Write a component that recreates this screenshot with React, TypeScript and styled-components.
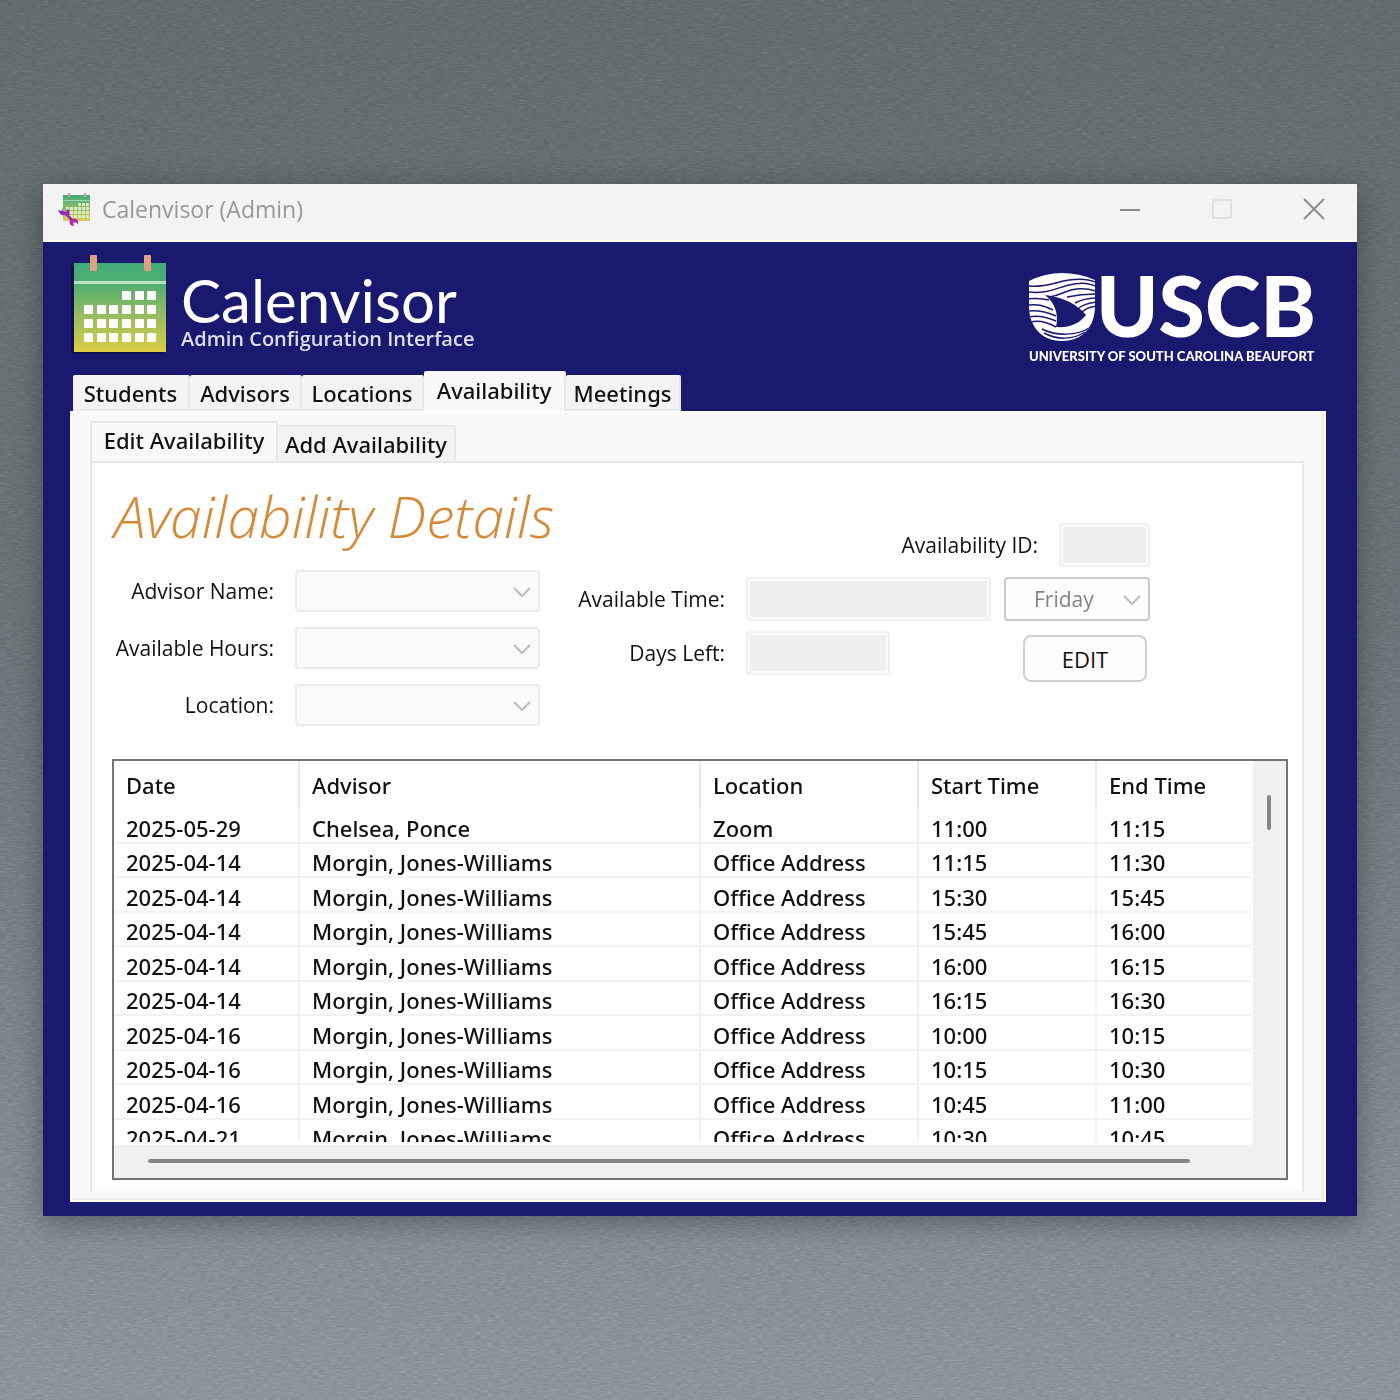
import React from "react";
import styled, { createGlobalStyle, css } from "styled-components";

const sans = '"Open Sans", "Noto Sans", sans-serif';
const medium = '"Noto Sans", "Open Sans", sans-serif';
const NAVY = "#191970";

const Global = createGlobalStyle`
  *, *::before, *::after { box-sizing: border-box; }
  body { margin: 0; font-family: ${sans}; color: #111; }
`;

const Desktop = styled.main`
  position: relative;
  min-height: 100vh;
  display: flex;
  align-items: center;
  padding: 40px 43px;
  background: linear-gradient(180deg, #5b6466 0%, #626b6e 45%, #737b82 75%, #838a94 100%);
`;

const Grain = styled.svg`
  position: absolute;
  inset: 0;
  width: 100%;
  height: 100%;
  opacity: 0.36;
  mix-blend-mode: overlay;
`;

const Window = styled.section`
  position: relative;
  flex: 1;
  min-width: 0;
  background: ${NAVY};
  box-shadow: 0 6px 26px rgba(0, 0, 0, 0.34);
`;

const TitleBar = styled.header`
  display: flex;
  align-items: center;
  height: 58px;
  padding: 0 31px 6px 14px;
  background: #f3f3f3;
  border-bottom: 2px solid #fff;
`;

const WindowTitle = styled.span`
  flex: 1;
  margin-left: 10px;
  font-size: 23px;
  line-height: 32px;
  color: #979797;
`;

const Controls = styled.div`
  display: flex;
  gap: 68px;
`;

const ControlButton = styled.button`
  display: flex;
  padding: 0;
  border: 0;
  background: none;
  color: #8c8c8c;
  &:disabled { color: #e0e0e0; }
`;

const Client = styled.div`
  padding: 0 31px 14px 27px;
`;

const Brand = styled.div`
  display: flex;
  justify-content: space-between;
  height: 129px;
  padding: 10px 10px 0 0;
`;

const BrandLeft = styled.div`
  display: flex;
  gap: 14px;
`;

const BrandText = styled.div`
  padding-top: 20px;
  color: #fff;
`;

const BrandName = styled.div`
  font-family: Lato, ${sans};
  font-size: 60px;
  line-height: 56px;
`;

const BrandSub = styled.div`
  font-size: 20px;
  line-height: 22px;
  font-weight: 600;
  color: #dedeee;
`;

const School = styled.div`
  padding-top: 20px;
  font-family: Lato, ${sans};
  font-weight: 900;
  color: #fff;
`;

const SchoolTop = styled.div`
  display: flex;
  align-items: flex-start;
  justify-content: space-between;
  height: 76px;
`;

const SchoolLetters = styled.span`
  font-size: 84px;
  line-height: 66px;
`;

const SchoolName = styled.div`
  font-size: 13px;
  line-height: 16px;
  white-space: nowrap;
`;

const TabList = styled.div<{ $inset: number }>`
  display: flex;
  align-items: flex-end;
  padding-left: ${(p) => p.$inset}px;
`;

const Tab = styled.button<{ $width: number; $active?: boolean }>`
  width: ${(p) => p.$width}px;
  height: 36px;
  padding: 0;
  border: 2px solid #e8e8e8;
  border-width: 2px 2px 2px 0;
  border-top-color: #f4f4f4;
  border-radius: 2px 2px 0 0;
  background: #f3f3f3;
  font: 500 22px/32px ${medium};
  color: #111;
  white-space: nowrap;
  ${(p) =>
    p.$active &&
    css`
      height: 40px;
      padding-bottom: 4px;
      border-bottom: 0;
      background: #f9f9f9;
    `}
`;

const OuterPanel = styled.div`
  padding: 9px 20px 8px 18px;
  border: 2px solid #fff;
  border-top-width: 1px;
  background: #f9f9f9;
  box-shadow: inset -3px -2px 0 #ececec;
`;

const SubTab = styled(Tab)`
  border-color: #e8e8e8;
  border-bottom-width: 0;
  border-left-width: ${(p) => (p.$active ? 2 : 0)}px;
`;

const InnerPanel = styled.div`
  padding: 0 0 3px 4px;
  border: solid #e8e8e8;
  border-width: 2px 2px 0 2px;
`;

const Page = styled.div`
  padding: 16px 14px 9px 16px;
  background: #fff;
`;

const Form = styled.form`
  display: flex;
  gap: 28px;
  margin-bottom: 33px;
`;

const LeftColumn = styled.div`
  width: 428px;
  display: flex;
  flex-direction: column;
  gap: 15px;
`;

const Heading = styled.h1`
  margin: 0;
  padding: 0 0 2px 2px;
  font: italic 300 57px/74px ${sans};
  color: #d68a38;
  white-space: nowrap;
`;

const RightColumn = styled.div`
  width: 582px;
  padding-top: 44px;
  display: flex;
  flex-direction: column;
  gap: 10px;
`;

const Field = styled.div<{ $end?: boolean }>`
  display: flex;
  align-items: center;
  justify-content: ${(p) => (p.$end ? "flex-end" : "flex-start")};
`;

const Label = styled.label<{ $width?: number }>`
  flex: none;
  width: ${(p) => (p.$width ? `${p.$width}px` : "auto")};
  margin-right: 21px;
  text-align: right;
  font-size: 21px;
  line-height: 30px;
  white-space: nowrap;
`;

const TextBox = styled.input<{ $width: number }>`
  flex: none;
  width: ${(p) => p.$width}px;
  height: 44px;
  padding: 0 8px;
  border: 2px solid #f1f1f1;
  border-radius: 4px;
  background: #efefef;
  box-shadow: inset 0 0 0 2px #fafafa;
  font: 21px ${sans};
`;

const SelectWrap = styled.span<{ $width: number }>`
  position: relative;
  width: ${(p) => p.$width}px;
  svg {
    position: absolute;
    right: 9px;
    top: 50%;
    margin-top: -4px;
    pointer-events: none;
  }
`;

const Select = styled.select<{ $strong?: boolean }>`
  display: block;
  width: 100%;
  height: ${(p) => (p.$strong ? 44 : 42)}px;
  padding: 0 28px;
  appearance: none;
  border: 2px solid ${(p) => (p.$strong ? "#cacaca" : "#ececec")};
  border-radius: 4px;
  background: ${(p) => (p.$strong ? "#fdfdfd" : "#fafafa")};
  color: #838383;
  opacity: 1;
  font: 21px ${sans};
`;

const Trailing = styled.div<{ $right: number }>`
  margin-left: auto;
  padding-right: ${(p) => p.$right}px;
  display: flex;
`;

const EditButton = styled.button`
  width: 124px;
  height: 47px;
  margin: 4px 0 -7px;
  padding: 0;
  border: 2px solid #d0d0d0;
  border-radius: 8px;
  background: #fdfdfd;
  font: 22px ${sans};
  color: #111;
`;

const Grid = styled.div`
  display: grid;
  grid-template-columns: 1fr 33px;
  grid-template-rows: 384px 33px;
  border: 2px solid #747474;
  background: #f0f0f0;
`;

const Viewport = styled.div`
  overflow: hidden;
  padding-right: 1px;
  border-bottom: 3px solid #fff;
  border-radius: 0 0 4px 0;
  background: #fff;
`;

const Table = styled.table`
  width: 100%;
  table-layout: fixed;
  border-collapse: separate;
  border-spacing: 0;
  font-family: ${medium};
  font-size: 22px;
  font-weight: 500;
  line-height: 28px;
  white-space: nowrap;
`;

const Col = styled.col<{ $width?: number }>`
  width: ${(p) => (p.$width ? `${p.$width}px` : "auto")};
`;

const Th = styled.th`
  height: 48px;
  padding: 0 12px;
  text-align: left;
  font-weight: 500;
  border-right: 2px solid #e8e8e8;
  &:last-child { border-right: 0; }
`;

const Tr = styled.tr`
  height: 35px;
  &:nth-child(even) { height: 34px; }
`;

const Td = styled.td`
  padding: 4px 12px 0;
  border-right: 2px solid #f2f2f2;
  border-bottom: 2px solid #f2f2f2;
  &:last-child { border-right: 0; }
`;

const VTrack = styled.div`
  padding: 34px 14px 0;
`;

const VThumb = styled.div`
  width: 4px;
  height: 35px;
  border-radius: 2px;
  background: #858585;
`;

const HTrack = styled.div`
  grid-column: 1 / -1;
  padding: 14px 96px 0 34px;
`;

const HThumb = styled.div`
  height: 4px;
  border-radius: 2px;
  background: #858585;
`;

const DOTS = [
  [38, 30], [51, 30], [63, 30],
  ...[44, 58, 72].flatMap((y) => [0, 13, 25, 38, 51, 63].map((x) => [x, y])),
];

function CalendarLogo() {
  return (
    <svg width="97" height="102" viewBox="0 0 97 102" aria-hidden="true">
      <defs>
        <linearGradient id="calBody" x1="0" y1="0" x2="0" y2="1">
          <stop offset="0" stopColor="#40ab78" />
          <stop offset="0.25" stopColor="#55ae70" />
          <stop offset="0.55" stopColor="#8fbb62" />
          <stop offset="1" stopColor="#dccd45" />
        </linearGradient>
      </defs>
      <rect x="1" y="14" width="91" height="88" fill="#10104f" />
      <rect x="4" y="11" width="92" height="89" fill="url(#calBody)" />
      <rect x="4" y="29" width="92" height="3" fill="#b9e2c4" />
      <rect x="20" y="3" width="7" height="16" rx="1" fill="#e0a083" />
      <rect x="74" y="3" width="7" height="16" rx="1" fill="#e0a083" />
      {DOTS.map(([x, y]) => (
        <rect key={`${x}-${y}`} x={x + 14} y={y + 9} width="9" height="9" rx="1" fill="#fff" />
      ))}
    </svg>
  );
}

function AppIcon() {
  return (
    <svg width="35" height="34" viewBox="0 0 35 34" aria-hidden="true">
      <defs>
        <linearGradient id="appBody" x1="0" y1="0" x2="0" y2="1">
          <stop offset="0" stopColor="#3fa97a" />
          <stop offset="0.5" stopColor="#8cba68" />
          <stop offset="1" stopColor="#d8cf55" />
        </linearGradient>
        <linearGradient id="wrench" x1="0" y1="0" x2="1" y2="1">
          <stop offset="0" stopColor="#7b2bd0" />
          <stop offset="1" stopColor="#c0249c" />
        </linearGradient>
      </defs>
      <rect x="6" y="3" width="27" height="26" fill="url(#appBody)" />
      <rect x="6" y="8" width="27" height="1" fill="#9ad4b2" />
      <rect x="11" y="1" width="2" height="4" fill="#e0a083" />
      <rect x="27" y="1" width="2" height="4" fill="#e0a083" />
      {[11, 15, 19, 23].flatMap((y, r) =>
        [9, 13, 17, 21, 25, 29].slice(r === 0 ? 3 : 0).map((x) => (
          <rect key={`${x}-${y}`} x={x} y={y} width="3" height="3" fill="#dcebc4" />
        )),
      )}
      <path
        d="M5 15l1 4 3 1 1-3c3 1 3 4 2 6l4 4c3-1 6 1 5 5l-3-2-2 1 1 3c-4 0-5-3-4-6l-5-5c-3 1-6-1-7-5l3 1 1-1z"
        fill="url(#wrench)"
      />
    </svg>
  );
}

function Shield() {
  return (
    <svg width="67" height="72" viewBox="0 0 67 72" aria-hidden="true">
      <defs>
        <clipPath id="shieldClip">
          <path d="M0 9Q16 1 33 1T66 8V34C66 54 54 69 33 69S0 54 0 34Z" />
        </clipPath>
      </defs>
      <g clipPath="url(#shieldClip)">
        <rect width="67" height="72" fill="#fff" />
        <g fill="none" stroke={NAVY} strokeWidth="1.5">
          <path d="M-1 14C16 16 26 10 40 8S60 8 67 10" />
          <path d="M-1 20C18 22 28 16 40 13S58 11 67 14" />
          <path d="M20 25C30 24 34 20 42 18S58 16 67 19" />
          <path d="M-1 27C6 26 12 26 20 28M38 25C48 23 56 22 67 22" />
          <path d="M-1 33C8 32 14 33 24 38M46 31C52 28 58 26 67 26" />
          <path d="M-1 39C8 38 18 40 27 44M50 36C54 32 60 31 67 30" />
          <path d="M0 45C8 43 18 45 27 49M53 40C56 37 60 35 67 34" />
          <path d="M2 50C10 48 18 50 27 55" />
          <path d="M13 57C26 64 48 64 60 56" />
          <path d="M15 61C28 68 44 68 56 60" />
        </g>
        <path d="M16 23C36 26 48 32 57 43C50 52 40 56 27 55C30 42 26 31 16 23Z" fill={NAVY} />
      </g>
    </svg>
  );
}

function Chevron() {
  return (
    <svg width="18" height="12" viewBox="0 0 18 12" fill="none" stroke="#bcbcbc" strokeWidth="2" aria-hidden="true">
      <path d="M1 1l8 8 8-8" />
    </svg>
  );
}

const MORGIN = "Morgin, Jones-Williams";
const OFFICE = "Office Address";
const ROWS = [
  ["2025-05-29", "Chelsea, Ponce", "Zoom", "11:00", "11:15"],
  ["2025-04-14", MORGIN, OFFICE, "11:15", "11:30"],
  ["2025-04-14", MORGIN, OFFICE, "15:30", "15:45"],
  ["2025-04-14", MORGIN, OFFICE, "15:45", "16:00"],
  ["2025-04-14", MORGIN, OFFICE, "16:00", "16:15"],
  ["2025-04-14", MORGIN, OFFICE, "16:15", "16:30"],
  ["2025-04-16", MORGIN, OFFICE, "10:00", "10:15"],
  ["2025-04-16", MORGIN, OFFICE, "10:15", "10:30"],
  ["2025-04-16", MORGIN, OFFICE, "10:45", "11:00"],
  ["2025-04-21", MORGIN, OFFICE, "10:30", "10:45"],
];

const TABS = [
  { name: "Students", width: 117 },
  { name: "Advisors", width: 112 },
  { name: "Locations", width: 122 },
  { name: "Availability", width: 142 },
  { name: "Meetings", width: 115 },
];

function SelectField({ id, label }: { id: string; label: string }) {
  return (
    <Field>
      <Label htmlFor={id} $width={162}>{label}</Label>
      <SelectWrap $width={245}>
        <Select id={id} disabled />
        <Chevron />
      </SelectWrap>
    </Field>
  );
}

export default function App() {
  return (
    <>
      <Global />
      <Desktop>
        <Grain aria-hidden="true">
          <filter id="grain">
            <feTurbulence type="fractalNoise" baseFrequency="0.16 0.7" numOctaves="4" seed="4" />
            <feColorMatrix type="saturate" values="0" />
          </filter>
          <rect width="100%" height="100%" filter="url(#grain)" />
        </Grain>
        <Window>
          <TitleBar>
            <AppIcon />
            <WindowTitle>Calenvisor (Admin)</WindowTitle>
            <Controls>
              <ControlButton aria-label="Minimize">
                <svg width="24" height="24" stroke="currentColor" strokeWidth="2" fill="none"><path d="M2 13h20" /></svg>
              </ControlButton>
              <ControlButton aria-label="Maximize" disabled>
                <svg width="24" height="24" stroke="currentColor" strokeWidth="2" fill="none"><rect x="3" y="3" width="18" height="18" rx="2" /></svg>
              </ControlButton>
              <ControlButton aria-label="Close">
                <svg width="24" height="24" stroke="currentColor" strokeWidth="2" fill="none"><path d="M2 2l20 20M22 2L2 22" /></svg>
              </ControlButton>
            </Controls>
          </TitleBar>
          <Client>
            <Brand>
              <BrandLeft>
                <CalendarLogo />
                <BrandText>
                  <BrandName>Calenvisor</BrandName>
                  <BrandSub>Admin Configuration Interface</BrandSub>
                </BrandText>
              </BrandLeft>
              <School>
                <SchoolTop>
                  <Shield />
                  <SchoolLetters>USCB</SchoolLetters>
                </SchoolTop>
                <SchoolName>UNIVERSITY OF SOUTH CAROLINA BEAUFORT</SchoolName>
              </School>
            </Brand>
            <TabList $inset={3} role="tablist">
              {TABS.map((t) => (
                <Tab key={t.name} role="tab" $width={t.width} $active={t.name === "Availability"} aria-selected={t.name === "Availability"}>
                  {t.name}
                </Tab>
              ))}
            </TabList>
            <OuterPanel>
              <TabList $inset={0} role="tablist">
                <SubTab role="tab" $width={188} $active aria-selected>Edit Availability</SubTab>
                <SubTab role="tab" $width={178} aria-selected={false}>Add Availability</SubTab>
              </TabList>
              <InnerPanel>
                <Page>
                  <Form onSubmit={(e) => e.preventDefault()}>
                    <LeftColumn>
                      <Heading>Availability Details</Heading>
                      <SelectField id="advisor" label="Advisor Name:" />
                      <SelectField id="hours" label="Available Hours:" />
                      <SelectField id="location" label="Location:" />
                    </LeftColumn>
                    <RightColumn>
                      <Field $end>
                        <Label htmlFor="availability-id">Availability ID:</Label>
                        <TextBox id="availability-id" $width={91} disabled />
                      </Field>
                      <Field>
                        <Label htmlFor="time" $width={157}>Available Time:</Label>
                        <TextBox id="time" $width={245} disabled />
                        <Trailing $right={0}>
                          <SelectWrap $width={146}>
                            <Select aria-label="Day" $strong disabled>
                              <option>Friday</option>
                            </Select>
                            <Chevron />
                          </SelectWrap>
                        </Trailing>
                      </Field>
                      <Field>
                        <Label htmlFor="days" $width={157}>Days Left:</Label>
                        <TextBox id="days" $width={144} disabled />
                        <Trailing $right={3}>
                          <EditButton type="submit">EDIT</EditButton>
                        </Trailing>
                      </Field>
                    </RightColumn>
                  </Form>
                  <Grid>
                    <Viewport>
                      <Table>
                        <colgroup>
                          <Col $width={186} />
                          <Col />
                          <Col $width={218} />
                          <Col $width={178} />
                          <Col $width={155} />
                        </colgroup>
                        <thead>
                          <tr>
                            <Th>Date</Th>
                            <Th>Advisor</Th>
                            <Th>Location</Th>
                            <Th>Start Time</Th>
                            <Th>End Time</Th>
                          </tr>
                        </thead>
                        <tbody>
                          {ROWS.map((row, i) => (
                            <Tr key={i}>
                              {row.map((cell, j) => (
                                <Td key={j}>{cell}</Td>
                              ))}
                            </Tr>
                          ))}
                        </tbody>
                      </Table>
                    </Viewport>
                    <VTrack><VThumb /></VTrack>
                    <HTrack><HThumb /></HTrack>
                  </Grid>
                </Page>
              </InnerPanel>
            </OuterPanel>
          </Client>
        </Window>
      </Desktop>
    </>
  );
}
